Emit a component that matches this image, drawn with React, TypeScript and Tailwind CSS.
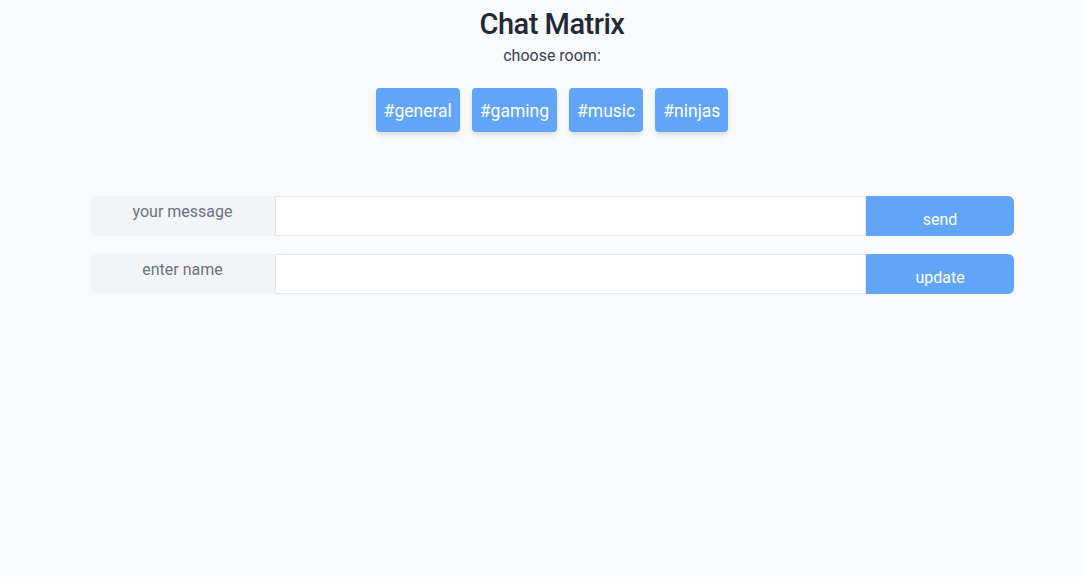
const rooms = ["general", "gaming", "music", "ninjas"];

const rows = [
  { label: "your message", action: "send" },
  { label: "enter name", action: "update" },
];

export default function App() {
  return (
    <div
      className="min-h-[577px] bg-[#f9fafb] pl-[21px] text-[#1f2937]"
      style={{ fontFamily: "Roboto, 'Noto Sans', sans-serif" }}
    >
      <header className="text-center">
        <h1 className="pt-[4px] text-[29px] font-medium leading-[40px] tracking-[-0.5px] text-[#1f2937]">Chat Matrix</h1>
        <p className="text-[16px] leading-[24px] text-[#374151]">choose room:</p>
        <nav className="mt-[20px] flex justify-center gap-3">
          {rooms.map((room) => (
            <button
              key={room}
              className="h-11 rounded-sm bg-[#60a5fa] px-[8px] pt-[3px] text-[17.5px] text-white shadow-md"
            >
              #{room}
            </button>
          ))}
        </nav>
      </header>

      <div className="mx-[69px] mt-16 flex flex-col gap-[18px]">
        {rows.map((row) => (
          <div key={row.label} className="flex h-10">
            <label className="w-[185px] shrink-0 rounded-l-md bg-[#f3f4f6] pt-[4px] text-center text-[16px] text-[#6b7280]">
              {row.label}
            </label>
            <input className="flex-1 border border-[#e5e7eb] bg-white px-3 outline-none" />
            <button className="w-[148px] shrink-0 rounded-r-md bg-[#60a5fa] pt-[8px] text-[16px] text-white">
              {row.action}
            </button>
          </div>
        ))}
      </div>
    </div>
  );
}
